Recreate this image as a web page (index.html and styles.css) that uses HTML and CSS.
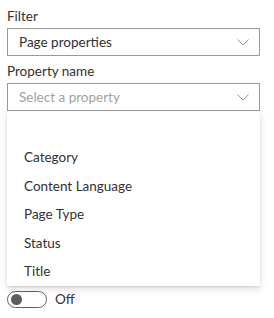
FILE: index.html
```html
<!DOCTYPE html>
<html lang="en">
<head>
  <meta charset="UTF-8">
  <title>Property filter</title>
  <link rel="stylesheet" href="styles.css">
</head>
<body>
  <div class="panel">
    <div class="label label-first">Filter</div>
    <div class="dropdown">
      <span class="dropdown-text">Page properties</span>
      <svg class="chevron" width="12" height="7" viewBox="0 0 12 7"><polyline points="0.5,0.5 6,6 11.5,0.5" fill="none" stroke="#979593" stroke-width="1"/></svg>
    </div>

    <div class="label">Property name</div>
    <div class="dropdown">
      <span class="dropdown-text placeholder">Select a property</span>
      <svg class="chevron" width="12" height="7" viewBox="0 0 12 7"><polyline points="0.5,0.5 6,6 11.5,0.5" fill="none" stroke="#979593" stroke-width="1"/></svg>
    </div>

    <!-- open list of the property dropdown -->
    <div class="menu">
      <div class="menu-item">Category</div>
      <div class="menu-item">Content Language</div>
      <div class="menu-item">Page Type</div>
      <div class="menu-item">Status</div>
      <div class="menu-item">Title</div>
    </div>

    <div class="toggle-row">
      <div class="toggle"><div class="thumb"></div></div>
      <span class="toggle-text">Off</span>
    </div>
  </div>
</body>
</html>
```

FILE: styles.css
```css
* {margin:0; padding:0; box-sizing:border-box;}
html,body {
  width:100%; height:100%; overflow:hidden;
  background:#fff; color:#323130;
  font-family: Lato, "Open Sans", Arial, sans-serif;
  font-size:13.5px;
}
.panel {
  padding:0 14px 0 7px;
}
.label {
  line-height:20px; padding:5px 0 2px;
  color:#323130;
}
.label-first {padding-top:6px;}
.dropdown {
  height:28px; border:1px solid #999;
  display:flex; align-items:center; justify-content:space-between;
  padding:0 10px 0 11px;
}
.dropdown-text {line-height:26px;}
.placeholder {color:#a19f9d;}
.chevron {display:block;}
.menu {
  margin-top:1px; padding-top:31px;
  background:#fff;
  box-shadow:0 3.2px 7.2px rgba(0,0,0,.132), 0 0.6px 1.8px rgba(0,0,0,.108);
}
.menu-item {
  height:28.5px; line-height:28.5px; padding-left:17px;
}
.toggle-row {
  display:flex; align-items:center; gap:8px;
  margin-top:5px;
}
.toggle {
  width:40px; height:17px; border:1px solid #605e5c; border-radius:9px;
  display:flex; align-items:center; padding-left:3px;
}
.thumb {
  width:11px; height:11px; border-radius:50%; background:#605e5c;
}
.toggle-text {line-height:17px;}
```
